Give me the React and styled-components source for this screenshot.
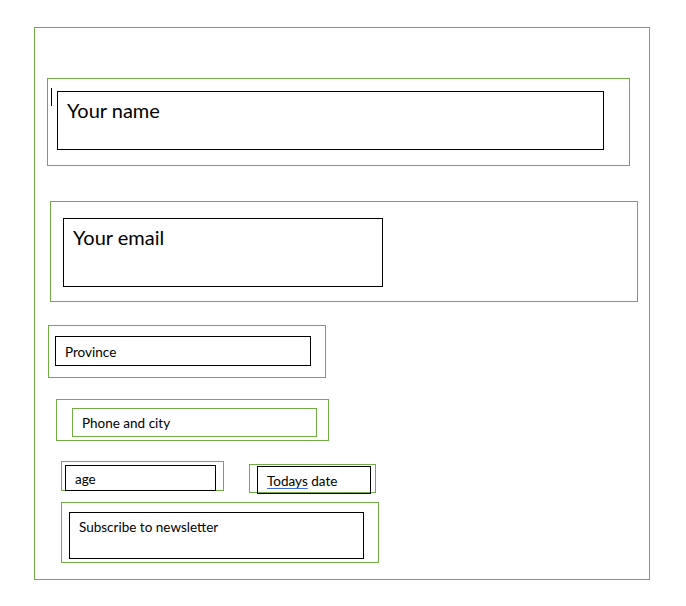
import React from 'react';
import styled, { createGlobalStyle } from 'styled-components';

const GlobalStyle = createGlobalStyle`
  html, body {
    margin: 0;
    padding: 0;
    background: #ffffff;
  }
  body {
    font-family: Lato, "Open Sans", sans-serif;
    color: #000;
  }
`;

const green = '#70ad47';

const Page = styled.div`
  padding: 27px 0 0 34px;
`;

const Frame = styled.div`
  box-sizing: border-box;
  width: 616px;
  height: 553px;
  border: 1px solid ${green};
`;

const Group = styled.div`
  box-sizing: border-box;
  display: flex;
  align-items: flex-start;
  width: ${(p) => p.$w}px;
  height: ${(p) => p.$h}px;
  margin: ${(p) => p.$mt || 0}px 0 0 ${(p) => p.$ml || 0}px;
  padding: ${(p) => p.$pt}px 0 0 ${(p) => p.$pl}px;
  border: 1px solid ${green};
`;

const Caret = styled.span`
  flex: none;
  width: 1px;
  height: 18px;
  margin: 9px 5px 0 3px;
  background: #000;
`;

const Field = styled.div`
  box-sizing: border-box;
  flex: none;
  width: ${(p) => p.$w}px;
  height: ${(p) => p.$h}px;
  margin-top: ${(p) => p.$mt || 0}px;
  padding: ${(p) => p.$pad}px 0 0 9px;
  border: 1px solid ${(p) => (p.$green ? green : '#000')};
  font-size: ${(p) => p.$fs || 13.5}px;
  line-height: 1.2;
  white-space: nowrap;
`;

const Row = styled.div`
  display: flex;
  align-items: flex-start;
`;

const Spell = styled.span`
  text-decoration: underline solid #3b6fd6;
  text-decoration-thickness: 1px;
  text-underline-offset: 2px;
`;

export default function App() {
  return (
    <>
      <GlobalStyle />
      <Page>
        <Frame>
          <Group $w={583} $h={88} $mt={50} $ml={12} $pt={0} $pl={0}>
            <Caret />
            <Field $w={547} $h={59} $fs={20} $pad={6} $mt={12}>
              Your name
            </Field>
          </Group>

          <Group $w={588} $h={101} $mt={35} $ml={15} $pt={16} $pl={12}>
            <Field $w={320} $h={69} $fs={20} $pad={6}>
              Your email
            </Field>
          </Group>

          <Group $w={278} $h={53} $mt={23} $ml={13} $pt={10} $pl={6}>
            <Field $w={256} $h={30} $pad={6.5}>
              Province
            </Field>
          </Group>

          <Group $w={273} $h={42} $mt={21} $ml={21} $pt={8} $pl={15}>
            <Field $green $w={245} $h={29} $pad={5.5}>
              Phone and city
            </Field>
          </Group>

          <Row>
            <Group $w={163} $h={30} $mt={20} $ml={26} $pt={3} $pl={3}>
              <Field $w={151} $h={26} $pad={5}>
                age
              </Field>
            </Group>
            <Group $w={127} $h={29} $mt={23} $ml={25} $pt={1} $pl={7}>
              <Field $w={114} $h={28} $pad={6}>
                <Spell>Todays</Spell> date
              </Field>
            </Group>
          </Row>

          <Group $w={318} $h={61} $mt={9} $ml={26} $pt={9} $pl={7}>
            <Field $w={295} $h={47} $pad={6}>
              Subscribe to newsletter
            </Field>
          </Group>
        </Frame>
      </Page>
    </>
  );
}
